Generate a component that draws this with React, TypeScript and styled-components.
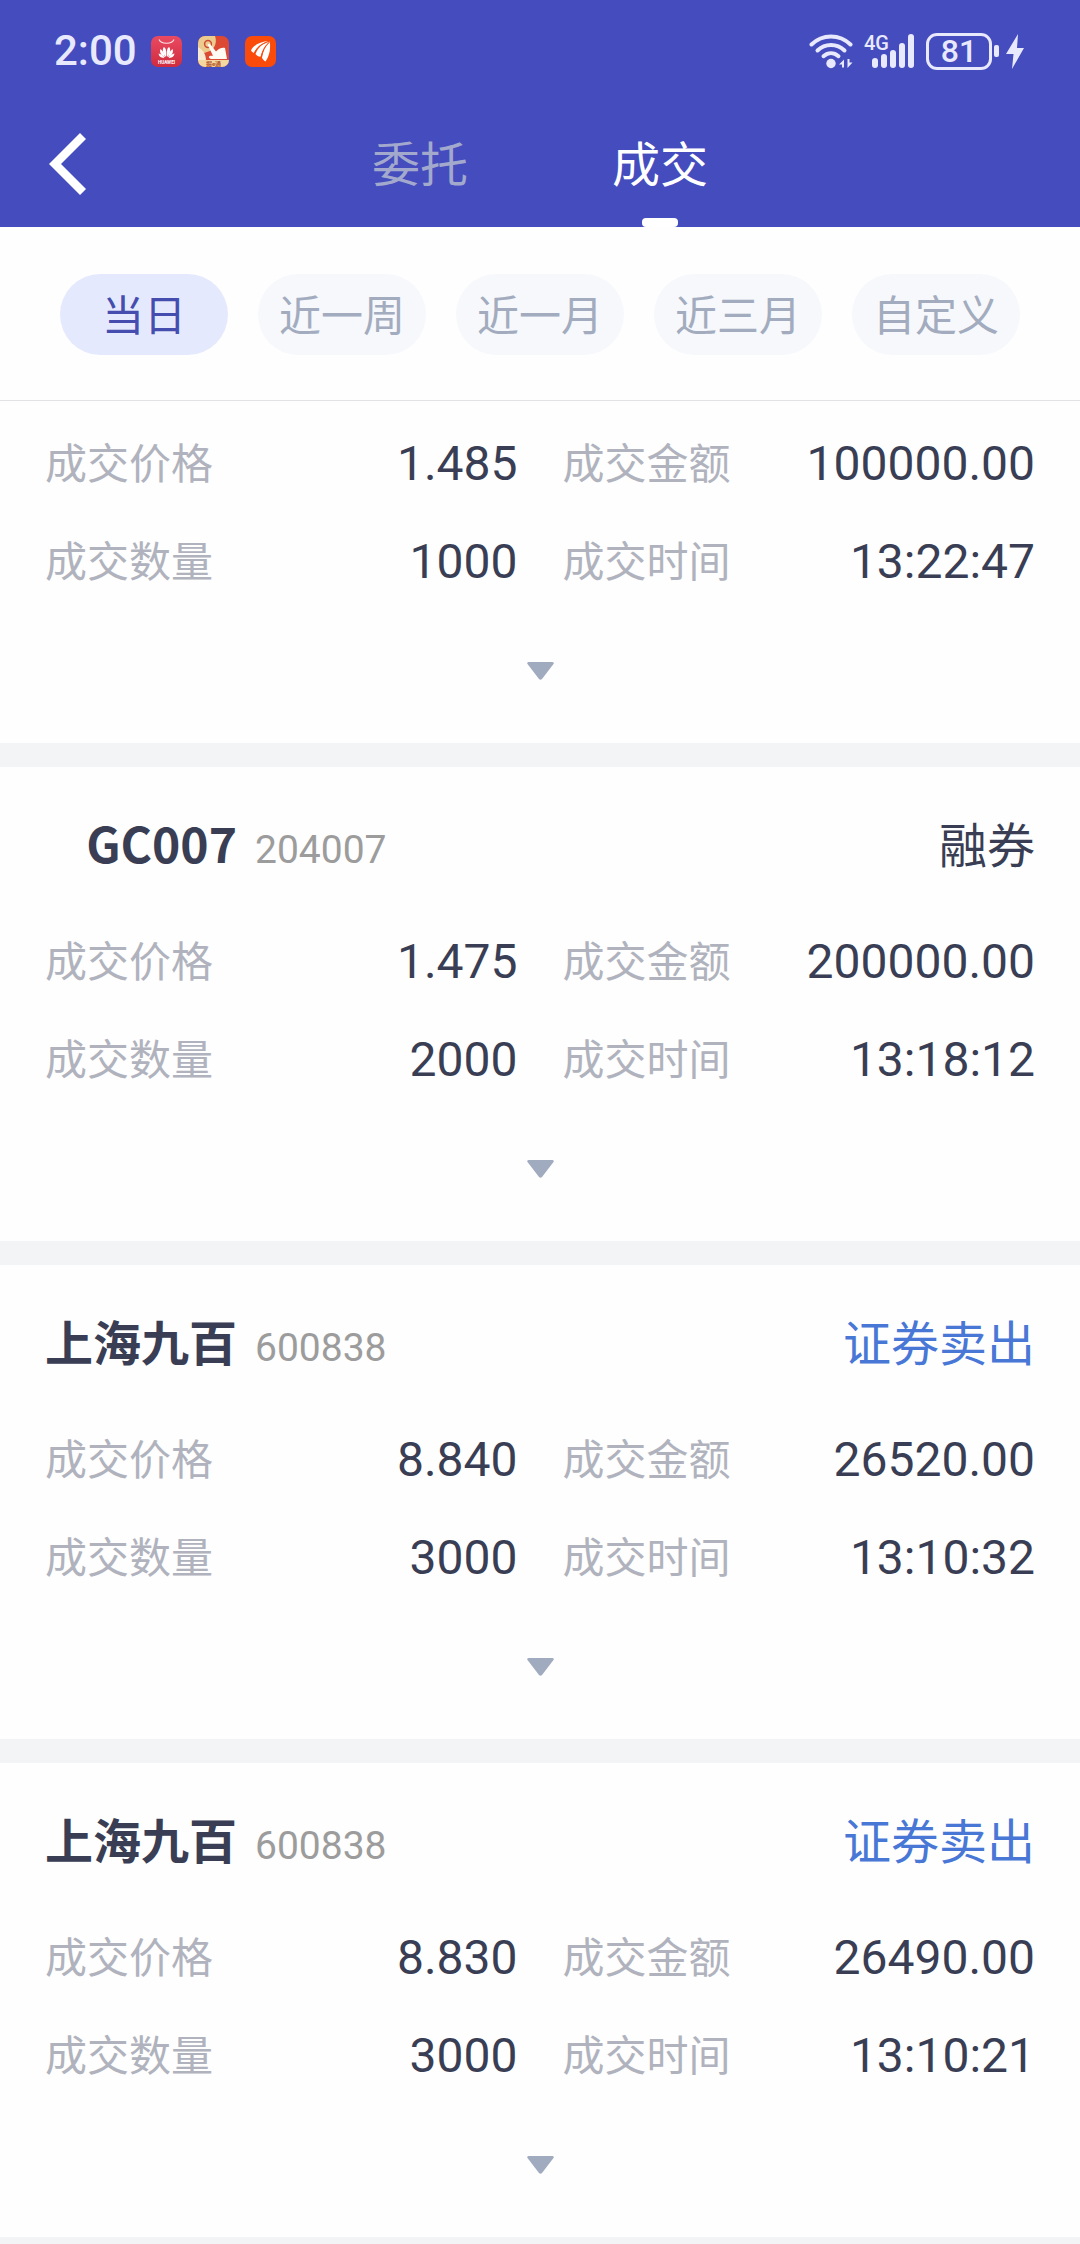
import React, { useState } from "react";
import styled, { createGlobalStyle } from "styled-components";

const cjk = '"Noto Sans CJK SC", sans-serif';
const latin = 'Roboto, "Noto Sans CJK SC", sans-serif';

const color = {
  brand: "#444cbe",
  status: "#e9e9fd",
  tabIdle: "#a2a9cd",
  ink: "#393e55",
  label: "#b0b3bd",
  code: "#9c9c9c",
  sell: "#4877d6",
  muted: "#a3acbe",
  band: "#f3f4f6",
};

const GlobalStyle = createGlobalStyle`
  *, *::before, *::after { box-sizing: border-box; }
  body { margin: 0; background: #fefefe; font-family: ${cjk}; color: ${color.ink}; }
  button { border: 0; padding: 0; background: none; font: inherit; color: inherit; cursor: pointer; }
  svg { display: block; }
`;

const Screen = styled.div`
  display: flex;
  flex-direction: column;
  height: 100vh;
  background: #fefefe;
`;

const Header = styled.header`
  flex: none;
  background: ${color.brand};
`;

const StatusBar = styled.div`
  display: flex;
  justify-content: space-between;
  align-items: center;
  height: 100px;
  padding: 2px 56px 0 54px;
  color: ${color.status};
  font-family: ${latin};
  font-weight: 500;
`;

const StatusGroup = styled.div<{ $gap: number }>`
  display: flex;
  align-items: center;
  gap: ${(p) => p.$gap}px;
`;

const Clock = styled.time`
  font-size: 42px;
  line-height: 48px;
`;

const BatteryWrap = styled.div`
  display: flex;
  align-items: center;
  gap: 2px;
`;

const BatteryBody = styled.div`
  display: flex;
  justify-content: center;
  align-items: center;
  width: 66px;
  height: 37px;
  border: 3px solid ${color.status};
  border-radius: 11px;
  font-size: 32px;
  line-height: 32px;
`;

const BatteryNub = styled.div`
  width: 5px;
  height: 12px;
  border-radius: 2px;
  background: ${color.status};
`;

const AppBar = styled.div`
  display: grid;
  grid-template-columns: 1fr auto 1fr;
  height: 127px;
`;

const BackButton = styled.button`
  display: flex;
  align-items: center;
  justify-self: start;
  padding: 0 49px;
`;

const Tabs = styled.nav`
  display: flex;
`;

const Tab = styled.button<{ $active: boolean }>`
  display: grid;
  grid-template-rows: 3px 1fr 9px;
  justify-items: center;
  align-items: center;
  width: 240px;
  font-size: 48px;
  line-height: 72px;
  color: ${(p) => (p.$active ? "#fff" : color.tabIdle)};

  &::before {
    content: "";
  }

  &::after {
    content: "";
    width: 36px;
    height: 9px;
    border-radius: 4px;
    background: ${(p) => (p.$active ? "#fff" : "transparent")};
  }
`;

const Filters = styled.div`
  flex: none;
  display: flex;
  gap: 30px;
  padding: 47px 60px 45px;
  border-bottom: 1px solid #e2e2e4;
`;

const Chip = styled.button<{ $active: boolean }>`
  flex: 1;
  height: 81px;
  padding-bottom: 3px;
  border-radius: 41px;
  font-size: 42px;
  line-height: 78px;
  white-space: nowrap;
  background: ${(p) => (p.$active ? "#e5e9fd" : "#f6f8fc")};
  color: ${(p) => (p.$active ? "#454eae" : color.muted)};
`;

const List = styled.main`
  flex: 1;
  min-height: 0;
  overflow-y: auto;
  scrollbar-width: none;
`;

const Card = styled.article<{ $headless: boolean }>`
  padding: ${(p) => (p.$headless ? 13 : 42)}px 45px 11px;
  border-bottom: 24px solid ${color.band};
`;

const CardHead = styled.div`
  display: flex;
  align-items: baseline;
  gap: 18px;
  height: 103px;
  line-height: 66px;
`;

const Name = styled.h2`
  margin: 0;
  min-width: 192px;
  font-size: 48px;
  font-weight: 700;
  text-align: right;
`;

const Code = styled.span`
  font-family: ${latin};
  font-size: 39px;
  color: ${color.code};
`;

const Side = styled.span<{ $sell: boolean }>`
  margin-left: auto;
  font-size: 48px;
  color: ${(p) => (p.$sell ? color.sell : color.ink)};
`;

const Facts = styled.dl`
  display: grid;
  grid-template-columns: 1fr 1fr;
  column-gap: 45px;
  margin: 0;
`;

const Fact = styled.div`
  display: flex;
  justify-content: space-between;
  align-items: center;
  height: 98px;
  white-space: nowrap;
`;

const Term = styled.dt`
  padding-bottom: 4px;
  font-size: 42px;
  line-height: 60px;
  color: ${color.label};
`;

const Value = styled.dd`
  margin: 0;
  padding-top: 2px;
  font-family: ${latin};
  font-size: 48px;
  line-height: 60px;
`;

const Expand = styled.button`
  display: flex;
  justify-content: center;
  align-items: center;
  width: 100%;
  height: 122px;
`;

const MallIcon = () => (
  <svg width="31" height="31" viewBox="0 0 31 31" aria-hidden="true">
    <defs>
      <linearGradient id="mall" x1="0" y1="0" x2="0" y2="1">
        <stop offset="0" stopColor="#ea4a62" />
        <stop offset="1" stopColor="#cf2b3e" />
      </linearGradient>
    </defs>
    <rect width="31" height="31" rx="7" fill="url(#mall)" />
    <path d="M8 3.500c2 5 13 5 15 0" fill="none" stroke="#fbe3e6" strokeWidth="1.100" />
    <g fill="#fff">
      <path d="M15 21c-3-3-4.200-7-2.200-10 2 .6 3 5 2.200 10z" />
      <path d="M16 21c3-3 4.200-7 2.200-10-2 .6-3 5-2.200 10z" />
      <path d="M14 21.300c-4-1.500-5.600-5-4.600-8.300 2.400 1.500 4 4.500 4.600 8.300z" />
      <path d="M17 21.300c4-1.500 5.600-5 4.600-8.300-2.400 1.500-4 4.500-4.600 8.300z" />
      <path d="M13.300 21.900c-3.300.3-5.500-1.600-5.800-4.400 2.300.6 4.400 2 5.800 4.400z" />
      <path d="M17.700 21.900c3.300.3 5.500-1.600 5.800-4.400-2.300.6-4.400 2-5.800 4.400z" />
    </g>
    <text x="15.500" y="27.500" fontSize="4.600" fontWeight="700" textAnchor="middle" fill="#fff">HUAWEI</text>
  </svg>
);

const GestureIcon = () => (
  <svg width="31" height="31" viewBox="0 0 31 31" aria-hidden="true">
    <defs>
      <clipPath id="gesture"><rect width="31" height="31" rx="7" /></clipPath>
    </defs>
    <g clipPath="url(#gesture)">
      <rect width="31" height="31" fill="#dd4a34" />
      <path d="M0 0h17c3 8-2 15-8 16L0 19z" fill="#eccb8e" />
      <path d="M0 11c5 3 8 7 8 14H0z" fill="#f8ead2" />
      <circle cx="10" cy="8" r="3.400" fill="none" stroke="#cf4a35" strokeWidth="1.500" />
      <path d="M9.500 8.500c1-1.200 2.400-1 3.200.2l5.300 6.800c2.500-3 6-4.300 9-3.500L29 23H13c-3.500-1.500-2.500-4 2-3.200z" fill="#fffaf2" />
      <rect y="24" width="31" height="7" fill="#f3d79f" />
      <text x="15.500" y="29.800" fontSize="6" fontWeight="700" textAnchor="middle" fill="#b3542a">掘e通</text>
    </g>
  </svg>
);

const EastIcon = () => (
  <svg width="31" height="31" viewBox="0 0 31 31" aria-hidden="true">
    <rect width="31" height="31" rx="7" fill="#fa4b0a" />
    <g fill="#fff">
      <path d="M6 14.500C8.500 9 15 5.500 24.500 5c-7 2-12.500 5.500-15.500 12-1.200-.4-2.400-1.300-3-2.500z" />
      <path d="M10.500 18C13 11.500 17.500 7.500 24.800 5.500c-4.500 4-7.600 9-9.300 15.300-2-.3-3.900-1.200-5-2.800z" />
      <path d="M17 21.500c1-6.500 3.500-11.500 7.800-15.500.9 7-.3 13.500-4.300 19.500-1.700-.8-3-2.200-3.500-4z" />
    </g>
    <path d="M9.300 17.300C12 11 16.500 7.700 24 5.300M16.200 21.300C17.500 14.500 20 9.500 24.500 6" fill="none" stroke="#fa4b0a" strokeWidth="1" />
  </svg>
);

const WifiIcon = () => (
  <svg width="44" height="35" viewBox="0 0 44 35" aria-hidden="true">
    <g fill="none" stroke={color.status} strokeWidth="4" strokeLinecap="round">
      <path d="M2.500 10.500C13.500-.2 30.500-.2 41.500 10.500" />
      <path d="M8.500 16.500C16 9.200 28 9.200 35.500 16.500" />
      <path d="M14.500 22.200C19 18.300 25 18.300 29.500 22.200" />
    </g>
    <circle cx="22" cy="29.500" r="4.700" fill={color.status} />
    <path d="M30 30.500l5-5v8h-2v-3zM43.500 28.500l-5 5.500v-9h2v3.500z" fill={color.status} />
  </svg>
);

const SignalIcon = () => (
  <svg width="51" height="48" viewBox="0 -6 51 48" role="img" aria-label="4G">
    <g fill={color.status}>
      <rect x="8" y="25" width="6" height="10" rx="3" />
      <rect x="17" y="21" width="6" height="14" rx="3" />
      <rect x="26" y="17" width="6" height="18" rx="3" />
      <rect x="35" y="10" width="6" height="25" rx="3" />
      <rect x="44" y="1" width="6" height="34" rx="3" />
      <text x="0" y="17" fontSize="20">4G</text>
    </g>
  </svg>
);

const BoltIcon = () => (
  <svg width="18" height="35" viewBox="0 0 18 35" aria-hidden="true">
    <path d="M12 0L0 20h7.500L6 35 18 14h-7z" fill={color.status} />
  </svg>
);

const ChevronIcon = () => (
  <svg width="37" height="62" viewBox="0 0 37 62" aria-hidden="true">
    <path d="M0 31L31 0l6 6-25 25 25 25-6 6z" fill="#fff" />
  </svg>
);

const CaretIcon = () => (
  <svg width="27" height="18" viewBox="0 0 27 18" aria-hidden="true">
    <path d="M1.500 0h24q2 .4 1 2L15 17q-1.500 1.600-3 0L.5 2q-1-1.600 1-2z" fill="#a1abbf" />
  </svg>
);

type Deal = {
  name?: string;
  code?: string;
  side?: string;
  sell?: boolean;
  price: string;
  amount: string;
  count: string;
  time: string;
};

const deals: Deal[] = [
  { price: "1.485", amount: "100000.00", count: "1000", time: "13:22:47" },
  { name: "GC007", code: "204007", side: "融券", price: "1.475", amount: "200000.00", count: "2000", time: "13:18:12" },
  { name: "上海九百", code: "600838", side: "证券卖出", sell: true, price: "8.840", amount: "26520.00", count: "3000", time: "13:10:32" },
  { name: "上海九百", code: "600838", side: "证券卖出", sell: true, price: "8.830", amount: "26490.00", count: "3000", time: "13:10:21" },
];

const tabs = ["委托", "成交"];
const ranges = ["当日", "近一周", "近一月", "近三月", "自定义"];

const DealCard = ({ deal }: { deal: Deal }) => {
  const facts = [
    ["成交价格", deal.price],
    ["成交金额", deal.amount],
    ["成交数量", deal.count],
    ["成交时间", deal.time],
  ];
  return (
    <Card $headless={!deal.name}>
      {deal.name && (
        <CardHead>
          <Name>{deal.name}</Name>
          <Code>{deal.code}</Code>
          <Side $sell={!!deal.sell}>{deal.side}</Side>
        </CardHead>
      )}
      <Facts>
        {facts.map(([term, value]) => (
          <Fact key={term}>
            <Term>{term}</Term>
            <Value>{value}</Value>
          </Fact>
        ))}
      </Facts>
      <Expand type="button" aria-label="展开">
        <CaretIcon />
      </Expand>
    </Card>
  );
};

export default function App() {
  const [tab, setTab] = useState("成交");
  const [range, setRange] = useState("当日");

  return (
    <Screen>
      <GlobalStyle />
      <Header>
        <StatusBar>
          <StatusGroup $gap={14}>
            <Clock>2:00</Clock>
            <StatusGroup $gap={16}>
              <MallIcon />
              <GestureIcon />
              <EastIcon />
            </StatusGroup>
          </StatusGroup>
          <StatusGroup $gap={11}>
            <WifiIcon />
            <SignalIcon />
            <StatusGroup $gap={7}>
              <BatteryWrap>
                <BatteryBody>81</BatteryBody>
                <BatteryNub />
              </BatteryWrap>
              <BoltIcon />
            </StatusGroup>
          </StatusGroup>
        </StatusBar>
        <AppBar>
          <BackButton type="button" aria-label="返回">
            <ChevronIcon />
          </BackButton>
          <Tabs>
            {tabs.map((t) => (
              <Tab key={t} type="button" $active={t === tab} onClick={() => setTab(t)}>
                {t}
              </Tab>
            ))}
          </Tabs>
        </AppBar>
      </Header>
      <Filters>
        {ranges.map((r) => (
          <Chip key={r} type="button" $active={r === range} aria-pressed={r === range} onClick={() => setRange(r)}>
            {r}
          </Chip>
        ))}
      </Filters>
      <List>
        {deals.map((deal, i) => (
          <DealCard key={i} deal={deal} />
        ))}
      </List>
    </Screen>
  );
}
